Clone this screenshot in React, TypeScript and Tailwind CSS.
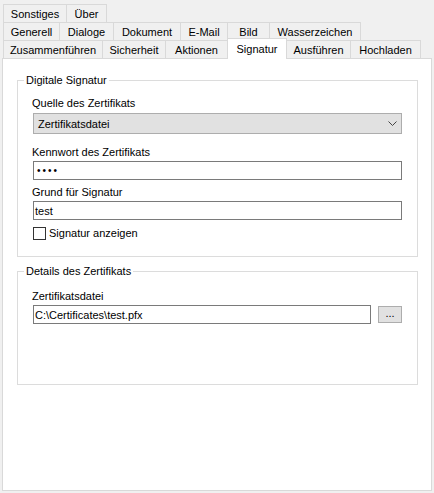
import React from 'react'

type Tab = { label: string; cls: string }

const row1: Tab[] = [
  { label: 'Sonstiges', cls: 'w-[63px] border-l' },
  { label: 'Über', cls: 'w-[41px] border-l border-r' },
]

const row2: Tab[] = [
  { label: 'Generell', cls: 'w-[56px] border-l' },
  { label: 'Dialoge', cls: 'w-[54px] border-l' },
  { label: 'Dokument', cls: 'w-[67px] border-l' },
  { label: 'E-Mail', cls: 'w-[47px] border-l' },
  { label: 'Bild', cls: 'w-[42px] border-l' },
  { label: 'Wasserzeichen', cls: 'w-[92px] border-l border-r' },
]

function TabRow({ tabs }: { tabs: Tab[] }) {
  return (
    <div className="flex pl-[3px]">
      {tabs.map((t) => (
        <div
          key={t.label}
          className={`${t.cls} h-[18px] border-t border-[#d9d9d9] bg-[#f0f0f0] flex items-center justify-center`}
        >
          {t.label}
        </div>
      ))}
    </div>
  )
}

function GroupBox({ title, className, children }: { title: string; className: string; children: React.ReactNode }) {
  return (
    <fieldset className={`ml-[14px] w-[401px] border border-[#dcdcdc] p-0 ${className}`}>
      <legend className="ml-[6px] px-[2px] leading-[14px]">{title}</legend>
      <div className="flex flex-col px-[15px]">{children}</div>
    </fieldset>
  )
}

export default function App() {
  return (
    <div className="w-[434px] h-[493px] bg-[#f0f0f0] overflow-hidden text-[11px] text-black font-['Liberation_Sans',sans-serif] leading-[14px]">
      {/* Tabs */}
      <div className="pt-[4px]">
        <TabRow tabs={row1} />
        <TabRow tabs={row2} />
      </div>
      <div className="flex items-start pl-[3px] h-[21px] -mt-[2px]">
        <div className="w-[99px] mt-[2px] h-[18px] border-t border-l border-[#d9d9d9] flex items-center justify-center">Zusammenführen</div>
        <div className="w-[63px] mt-[2px] h-[18px] border-t border-l border-[#d9d9d9] flex items-center justify-center">Sicherheit</div>
        <div className="w-[62px] mt-[2px] h-[18px] border-t border-l border-[#d9d9d9] flex items-center justify-center">Aktionen</div>
        <div className="relative z-10 w-[60px] h-[21px] border-t border-l border-r border-[#d9d9d9] bg-white flex items-center justify-center">Signatur</div>
        <div className="w-[63px] mt-[2px] h-[18px] border-t border-[#d9d9d9] flex items-center justify-center">Ausführen</div>
        <div className="w-[71px] mt-[2px] h-[18px] border-t border-l border-r border-[#d9d9d9] flex items-center justify-center">Hochladen</div>
      </div>

      {/* Page */}
      <div className="ml-[2px] -mt-px w-[430px] h-[433px] border border-[#d9d9d9] bg-white flex flex-col">
        <GroupBox title="Digitale Signatur" className="mt-[14px] pb-[16px]">
          <div className="mt-[9px] -ml-px">Quelle des Zertifikats</div>
          <div className="mt-[3px] h-[21px] border border-[#adadad] bg-[#e1e1e1] flex items-center justify-between pl-[4px] pr-[4px]">
            <span>Zertifikatsdatei</span>
            <svg width="9" height="5" viewBox="0 0 9 5" fill="none">
              <path d="M0.5 0.5 L4.5 4.5 L8.5 0.5" stroke="#444" strokeWidth="1" />
            </svg>
          </div>
          <div className="mt-[11px] -ml-px">Kennwort des Zertifikats</div>
          <div className="mt-[2px] h-[19px] border border-[#7a7a7a] flex items-center pl-[3px] tracking-[2px] text-[10px]">••••</div>
          <div className="mt-[5px] -ml-px">Grund für Signatur</div>
          <div className="mt-[2px] h-[19px] border border-[#7a7a7a] flex items-center pl-px">test</div>
          <div className="mt-[6px] flex items-center">
            <div className="w-[13px] h-[13px] border border-[#333] bg-white" />
            <span className="ml-[3px]">Signatur anzeigen</span>
          </div>
        </GroupBox>

        <GroupBox title="Details des Zertifikats" className="mt-[7px] pb-[60px]">
          <div className="mt-[11px] -ml-px">Zertifikatsdatei</div>
          <div className="mt-[2px] flex items-start">
            <div className="w-[338px] h-[19px] border border-[#7a7a7a] flex items-center pl-px">C:\Certificates\test.pfx</div>
            <div className="ml-[7px] mt-px w-[24px] h-[17px] border border-[#adadad] bg-[#e1e1e1] flex items-center justify-center leading-none pb-[2px]">...</div>
          </div>
        </GroupBox>
      </div>
    </div>
  )
}
